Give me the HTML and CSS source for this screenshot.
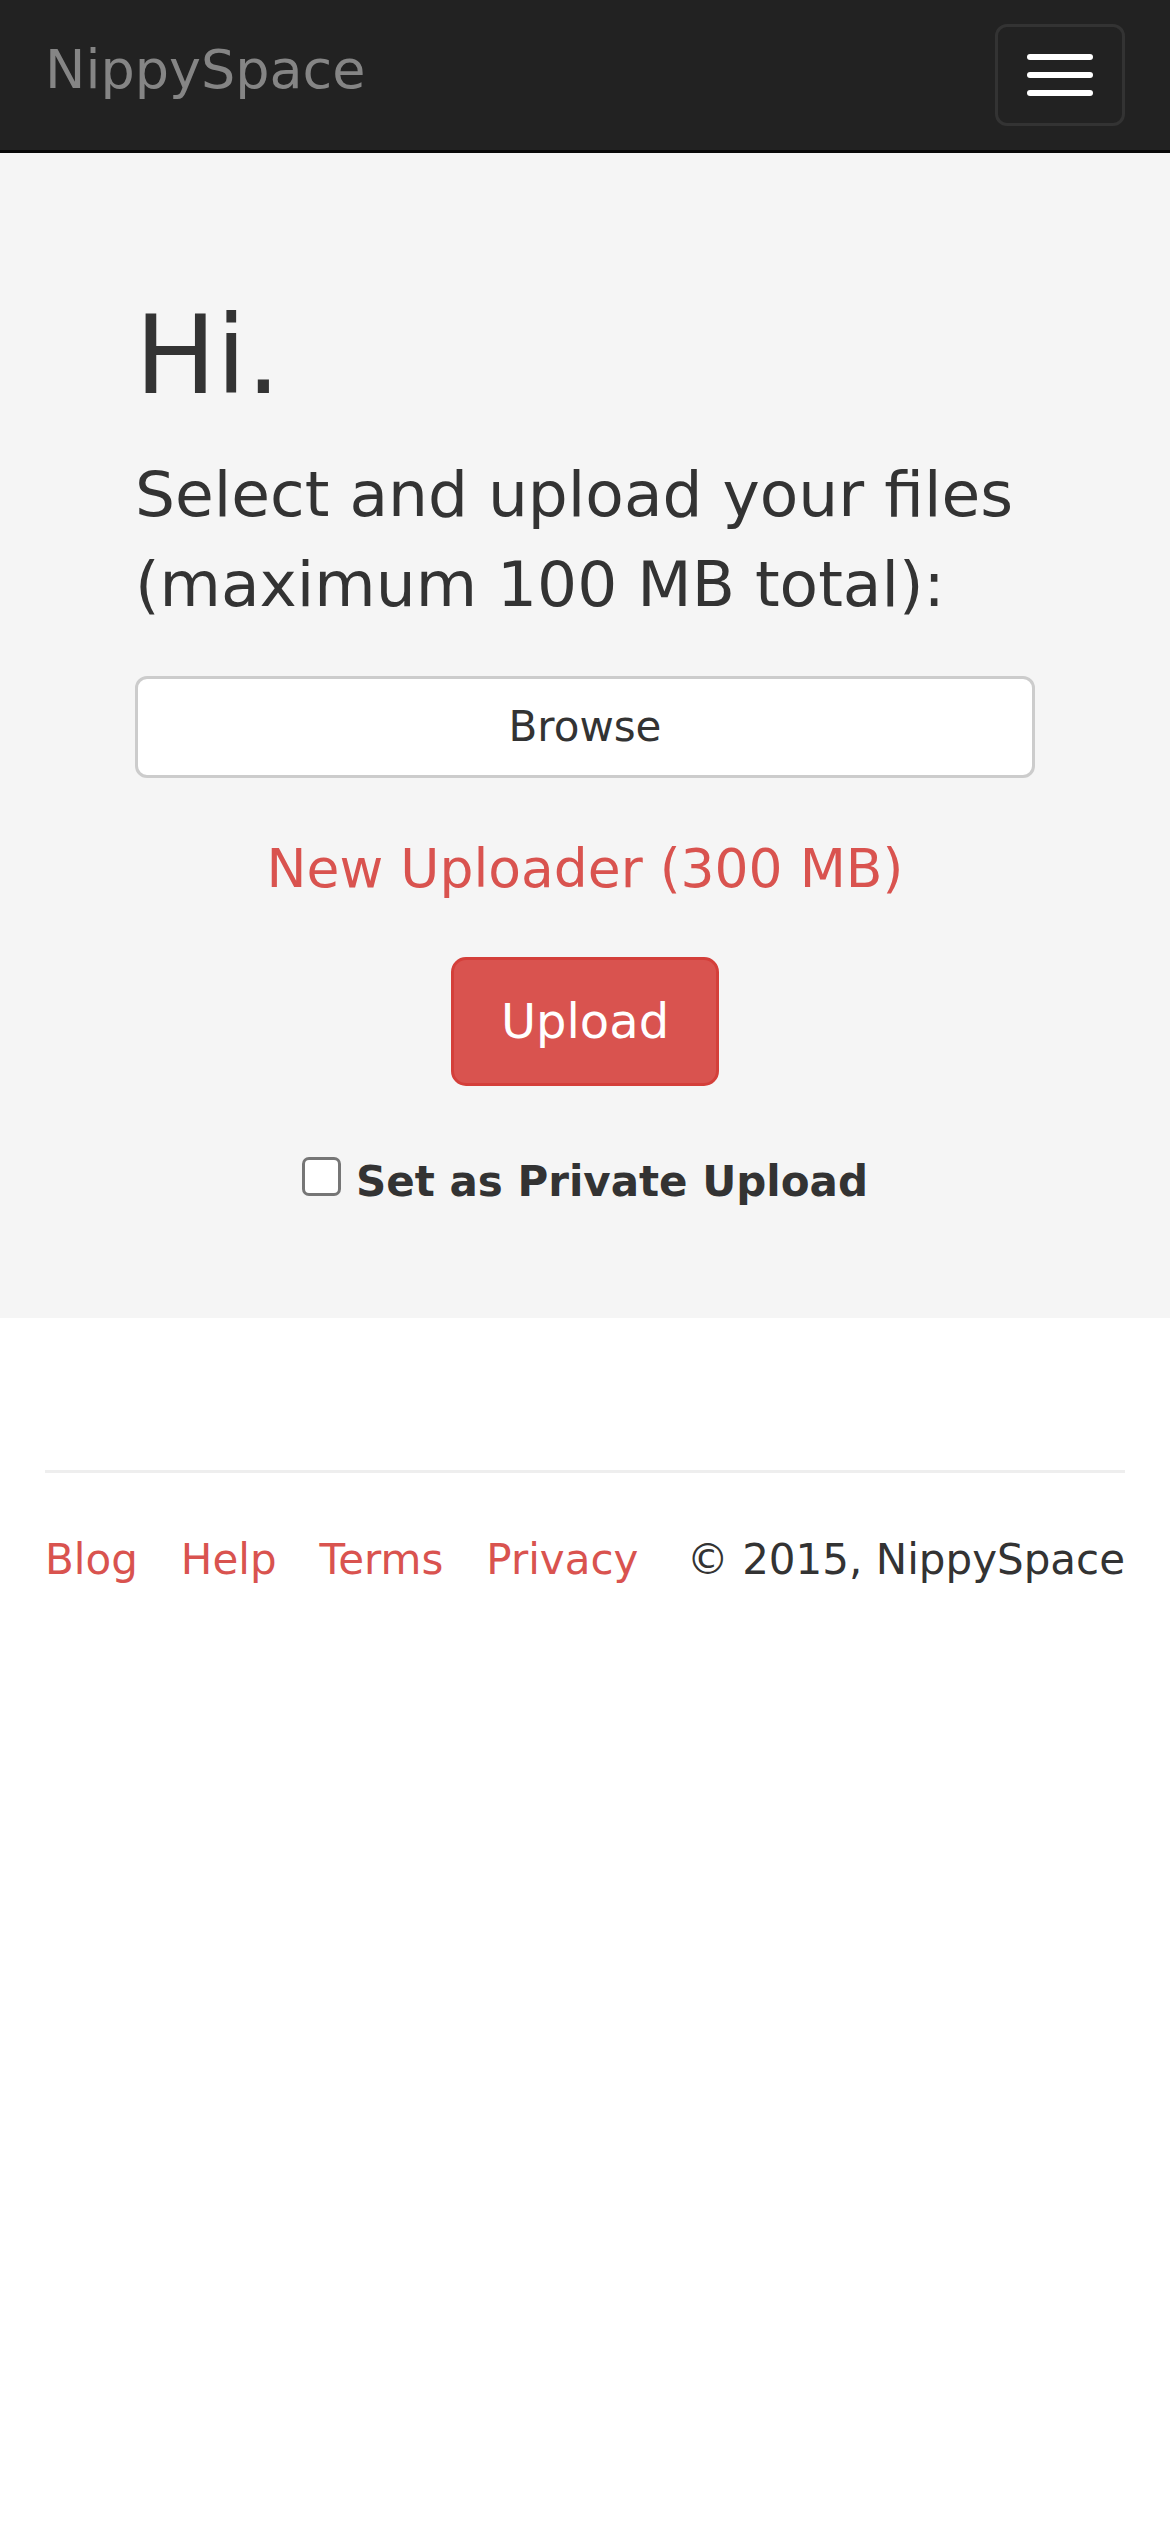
FILE: index.html
```html
<!DOCTYPE html>
<html lang="en">
<head>
<meta charset="utf-8">
<title>NippySpace</title>
<link rel="stylesheet" href="styles.css">
</head>
<body>
<nav class="navbar">
  <a class="brand" href="#">NippySpace</a>
  <button class="toggle" type="button" aria-label="Toggle navigation">
    <span class="bar"></span>
    <span class="bar"></span>
    <span class="bar"></span>
  </button>
</nav>

<main class="jumbotron">
  <div class="content">
    <h1 class="hello">Hi.</h1>
    <p class="lead">Select and upload your files (maximum 100 MB total):</p>
    <button class="browse" type="button">Browse</button>
    <a class="new-uploader" href="#">New Uploader (300 MB)</a>
    <div class="actions">
      <button class="upload" type="button">Upload</button>
    </div>
    <label class="private">
      <input type="checkbox" class="check">
      <span>Set as Private Upload</span>
    </label>
  </div>
</main>

<footer class="footer">
  <hr class="rule">
  <div class="footer-row">
    <ul class="links">
      <li><a href="#">Blog</a></li>
      <li><a href="#">Help</a></li>
      <li><a href="#">Terms</a></li>
      <li><a href="#">Privacy</a></li>
    </ul>
    <span class="copy">© 2015, NippySpace</span>
  </div>
</footer>
</body>
</html>
```

FILE: styles.css
```css
* {
  box-sizing: border-box;
}

html, body {
  margin: 0;
  padding: 0;
  background: #fff;
}

body {
  font-family: "DejaVu Sans", "Liberation Sans", sans-serif;
  font-size: 42px;
  line-height: 60px;
  color: #333;
}

a {
  text-decoration: none;
}

/* Navbar */
.navbar {
  height: 153px;
  background: #222;
  border-bottom: 3px solid #080808;
  display: flex;
  justify-content: space-between;
  align-items: flex-start;
  padding: 0 45px 0 45px;
}

.brand {
  font-size: 54px;
  line-height: 60px;
  color: #858585;
  margin-top: 40px;
}

.toggle {
  margin-top: 24px;
  width: 130px;
  height: 102px;
  background: transparent;
  border: 3px solid #333;
  border-radius: 12px;
  padding: 0;
  display: flex;
  flex-direction: column;
  align-items: center;
  justify-content: center;
  gap: 12px;
}

.bar {
  display: block;
  width: 66px;
  height: 6px;
  border-radius: 3px;
  background: #fff;
}

/* Jumbotron */
.jumbotron {
  background: #f5f5f5;
  padding: 143px 135px 106px;
}

.content {
  display: flex;
  flex-direction: column;
  align-items: stretch;
}

.hello {
  margin: 0;
  font-size: 108px;
  line-height: 119px;
  font-weight: normal;
  color: #333;
}

.lead {
  margin: 35px 0 0;
  font-size: 63px;
  line-height: 90px;
  color: #333;
}

.browse {
  margin-top: 46px;
  height: 102px;
  width: 100%;
  background: #fff;
  border: 3px solid #ccc;
  border-radius: 12px;
  font-family: inherit;
  font-size: 42px;
  line-height: 60px;
  color: #333;
  padding: 0;
}

.new-uploader {
  margin-top: 61px;
  align-self: center;
  font-size: 53.5px;
  line-height: 60px;
  color: #d9534f;
}

.actions {
  margin-top: 58px;
  display: flex;
  justify-content: center;
}

.upload {
  width: 268px;
  height: 129px;
  background: #d9534f;
  border: 3px solid #d43f3a;
  border-radius: 15px;
  color: #fff;
  font-family: inherit;
  font-size: 48px;
  line-height: 63px;
  padding: 0;
}

.private {
  margin-top: 66px;
  align-self: center;
  display: flex;
  align-items: center;
  gap: 15px;
  font-weight: bold;
  font-size: 42px;
  line-height: 60px;
  color: #333;
}

.check {
  -webkit-appearance: none;
  appearance: none;
  margin: 0;
  width: 39px;
  height: 39px;
  border: 3px solid #767676;
  border-radius: 7px;
  background: #fff;
  position: relative;
  top: -6px;
}

/* Footer */
.footer {
  padding: 152px 45px 0;
}

.rule {
  margin: 0;
  border: 0;
  border-top: 3px solid #eee;
}

.footer-row {
  margin-top: 57px;
  display: flex;
  justify-content: space-between;
  align-items: baseline;
}

.links {
  list-style: none;
  margin: 0;
  padding: 0;
  display: flex;
  gap: 43px;
}

.links a {
  color: #d9534f;
}

.copy {
  color: #333;
}
```
